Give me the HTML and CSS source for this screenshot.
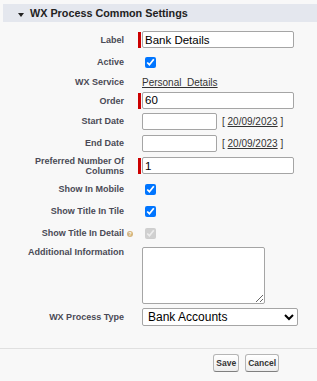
FILE: index.html
```html
<!DOCTYPE html>
<html lang="en">
<head>
    <meta charset="UTF-8">
    <title>WX Process Common Settings</title>
    <link rel="stylesheet" href="styles.css">
</head>
<body>
    <div class="page">
        <h3 class="sub-header"><span class="twist"></span>WX Process Common Settings</h3>
        <div class="form">
            <label class="lbl">Label</label>
            <div class="fld"><span class="req"><input class="txt wide" type="text" value="Bank Details"></span></div>

            <label class="lbl">Active</label>
            <div class="fld"><input class="chk" type="checkbox" checked></div>

            <label class="lbl">WX Service</label>
            <div class="fld"><a class="link" href="#">Personal&nbsp; Details</a></div>

            <label class="lbl">Order</label>
            <div class="fld"><span class="req"><input class="txt wide" type="text" value="60"></span></div>

            <label class="lbl">Start Date</label>
            <div class="fld"><input class="txt date" type="text"><span class="today">[ <a href="#">20/09/2023</a> ]</span></div>

            <label class="lbl">End Date</label>
            <div class="fld"><input class="txt date" type="text"><span class="today">[ <a href="#">20/09/2023</a> ]</span></div>

            <label class="lbl">Preferred Number Of Columns</label>
            <div class="fld"><span class="req"><input class="txt wide" type="text" value="1"></span></div>

            <label class="lbl">Show In Mobile</label>
            <div class="fld"><input class="chk" type="checkbox" checked></div>

            <label class="lbl">Show Title In Tile</label>
            <div class="fld"><input class="chk" type="checkbox" checked></div>

            <label class="lbl">Show Title In Detail<span class="help">?</span></label>
            <div class="fld"><input class="chk" type="checkbox" checked disabled></div>

            <label class="lbl top">Additional Information</label>
            <div class="fld top"><textarea class="area"></textarea></div>

            <label class="lbl">WX Process Type</label>
            <div class="fld">
                <select class="sel">
                    <option>Bank Accounts</option>
                    <option>Personal Details</option>
                </select>
            </div>
        </div>
        <div class="buttons">
            <button class="btn">Save</button>
            <button class="btn">Cancel</button>
        </div>
    </div>
</body>
</html>
```

FILE: styles.css
```css
*{margin:0;padding:0;box-sizing:border-box;}
body{
    background-color: #f8f8f8;
    font-family: "Liberation Sans", Arial, sans-serif;
    color: #000;
}
.page{
    width: 317px;
    padding-top: 4px;
}
.sub-header{
    margin-left: 3px;
    height: 18px;
    background-color: #e4e7ee;
    display: flex;
    align-items: center;
    padding-left: 15px;
    font-size: 10.8px;
    font-weight: bold;
    color: #222;
}
.twist{
    width: 0;
    height: 0;
    border-left: 3px solid transparent;
    border-right: 3px solid transparent;
    border-top: 4px solid #222;
    margin: 3px 6px 0 0;
}
.form{
    display: grid;
    grid-template-columns: 124px 1fr;
    grid-template-rows: 22px 22px 18px 19px 22px 22px 24px 22px 22px 22px 62px 22px;
    column-gap: 18px;
    margin-top: 7px;
}
.lbl{
    font-size: 9px;
    line-height: 10px;
    font-weight: bold;
    color: #4a4a56;
    text-align: right;
    align-self: center;
}
.lbl.top{
    align-self: start;
    padding-top: 3px;
}
.fld{
    display: flex;
    align-items: center;
}
.fld.top{
    align-items: flex-start;
    padding-top: 3px;
}
.req{
    display: flex;
    margin-left: -4px;
    border-left: 3px solid #c00;
    padding-left: 1px;
    height: 16px;
}
.txt{
    height: 17px;
    margin-top: -1px;
    border: 1px solid #a5a5a5;
    border-radius: 2px;
    padding: 0 2px;
    font-family: "Liberation Sans", Arial, sans-serif;
    font-size: 11.5px;
    color: #000;
    background: #fff;
}
.wide{
    width: 152px;
}
.date{
    width: 75px;
    margin-top: 0;
}
.today{
    margin-left: 5px;
    font-size: 10px;
    color: #333;
}
.today a, .link{
    color: #333;
    text-decoration: underline;
}
.link{
    font-size: 10px;
}
.chk{
    width: 11px;
    height: 11px;
    margin-left: 3px;
}
.help{
    display: inline-block;
    width: 6px;
    height: 6px;
    border-radius: 50%;
    background-color: #d3b47e;
    color: #fff;
    font-size: 5px;
    line-height: 6px;
    text-align: center;
    margin: 0 -9px 0 3px;
    vertical-align: 0;
}
.area{
    width: 123px;
    height: 57px;
    border: 1px solid #a5a5a5;
    border-radius: 2px;
    background: #fff;
    font-family: "Liberation Sans", Arial, sans-serif;
}
.sel{
    width: 156px;
    height: 18px;
    border: 1px solid #a5a5a5;
    border-radius: 2px;
    background: #fff;
    font-family: "Liberation Sans", Arial, sans-serif;
    font-size: 12px;
    color: #000;
    padding-left: 1px;
}
.buttons{
    margin-top: 20px;
    border-top: 1px solid #e0e0e0;
    padding: 5px 38px 0 0;
    display: flex;
    justify-content: flex-end;
    gap: 6px;
}
.btn{
    height: 18px;
    padding: 0 2px;
    border: 1px solid #b5b5b5;
    border-bottom-color: #7f7f7f;
    border-radius: 3px;
    background: linear-gradient(#fff, #ededed);
    font-family: "Liberation Sans", Arial, sans-serif;
    font-size: 8.5px;
    font-weight: bold;
    color: #333;
}
```
